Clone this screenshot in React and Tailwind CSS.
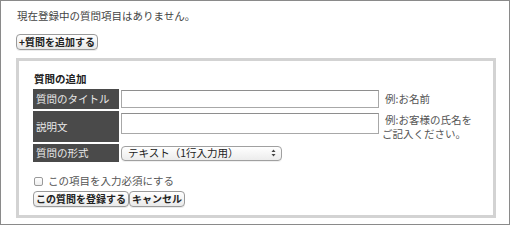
import React from "react";

const jp = { fontFamily: '"Noto Sans CJK JP", "Noto Sans", sans-serif' };

function MacButton({ children, className = "" }) {
  return (
    <button
      className={`h-[16px] px-[2px] rounded-[4px] border border-[#9a9a9a] bg-gradient-to-b from-white to-[#e9e9e9] text-[10px] leading-none font-bold text-[#222] shadow-[0_1px_0_rgba(0,0,0,0.08)] whitespace-nowrap ${className}`}
    >
      {children}
    </button>
  );
}

function Label({ children, tall }) {
  return (
    <td className={`bg-[#4a4a4a] text-[#e8e8e8] w-[86px] px-[3px] align-middle ${tall ? "h-[31px]" : ""}`}>
      {children}
    </td>
  );
}

export default function App() {
  return (
    <div style={jp} className="w-[510px] h-[225px] border border-[#8a8a8a] bg-white text-[10.5px] leading-[14px] text-[#444] pl-[15px] pt-[8px]">
      <p className="pl-[1px]">現在登録中の質問項目はありません。</p>

      <MacButton className="mt-[11px]">+質問を追加する</MacButton>

      <div className="mt-[8px] w-[480px] h-[160px] border-[3px] border-[#d3d3d3] pl-[14px] pr-[10px] pt-[11px]">
        <h2 className="font-bold text-[#222] pl-[1px] leading-[14px]">質問の追加</h2>

        <table className="mt-[1px] border-separate border-spacing-[2px] -ml-[2px]">
          <tbody>
            <tr className="h-[20px]">
              <Label>質問のタイトル</Label>
              <td className="w-[258px]">
                <div className="h-[18px] border border-[#a8a8a8] border-t-[#8e8e8e] bg-white" />
              </td>
              <td className="pl-[4px] text-[#555] align-middle whitespace-nowrap">例:お名前</td>
            </tr>
            <tr>
              <Label tall>説明文</Label>
              <td className="align-top pt-[2px]">
                <div className="h-[21px] border border-[#a8a8a8] border-t-[#8e8e8e] bg-white" />
              </td>
              <td className="text-[#555] leading-[14px] align-middle pt-[1px] whitespace-nowrap">
                <div className="pl-[4px]">例:お客様の氏名を</div>
                <div className="pl-[1px]">ご記入ください。</div>
              </td>
            </tr>
            <tr className="h-[18px]">
              <Label>質問の形式</Label>
              <td className="align-middle">
                <div className="w-[161px] h-[15px] rounded-[4px] border border-[#a0a0a0] bg-gradient-to-b from-white to-[#ececec] flex items-center justify-between pl-[6px] pr-[5px] text-[#222] shadow-[0_1px_0_rgba(0,0,0,0.06)]">
                  <span className="leading-none">テキスト（1行入力用）</span>
                  <svg width="5" height="8" viewBox="0 0 5 8">
                    <path d="M0.5 3 L2.5 0.5 L4.5 3 Z" fill="#444" />
                    <path d="M0.5 5 L2.5 7.5 L4.5 5 Z" fill="#444" />
                  </svg>
                </div>
              </td>
              <td />
            </tr>
          </tbody>
        </table>

        <label className="mt-[10px] flex items-center gap-[5px] pl-[1px] text-[#555]">
          <span className="w-[9px] h-[9px] rounded-[2px] border border-[#9a9a9a] bg-gradient-to-b from-white to-[#eee]" />
          この項目を入力必須にする
        </label>

        <div className="mt-[3px] flex">
          <MacButton>この質問を登録する</MacButton>
          <MacButton>キャンセル</MacButton>
        </div>
      </div>
    </div>
  );
}
